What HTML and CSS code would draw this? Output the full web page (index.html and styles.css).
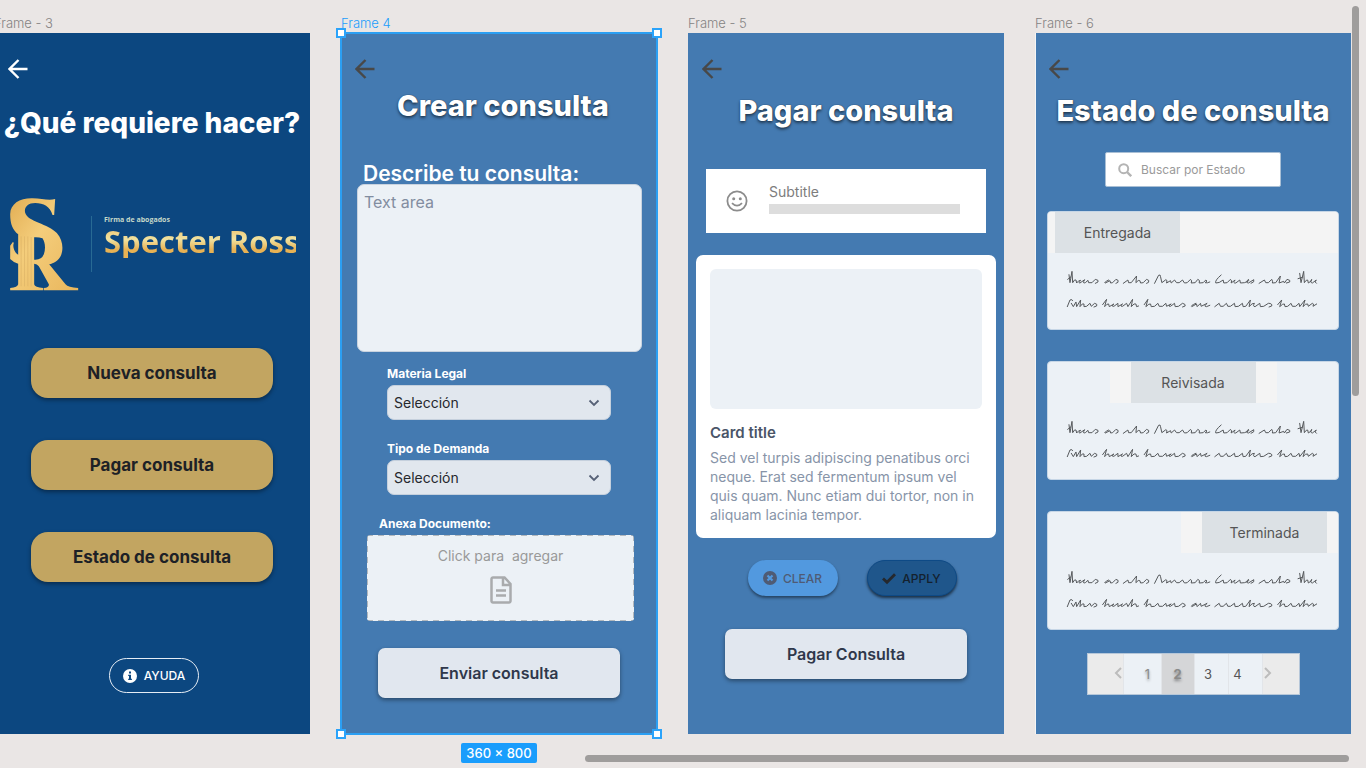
FILE: index.html
```html
<!DOCTYPE html>
<html lang="es">
<head>
<meta charset="utf-8">
<meta name="viewport" content="width=device-width, initial-scale=1">
<title>Specter Ross</title>
<link rel="stylesheet" href="styles.css">
</head>
<body>
<svg class="defs" aria-hidden="true">
  <symbol id="back" viewBox="0 0 20 20"><path d="M19.500 10H2M10.500 1L1.500 10l9 9" fill="none" stroke="currentColor" stroke-width="2.400"/></symbol>
  <symbol id="chevron" viewBox="0 0 12 8"><path d="M1.500 1.500L6 6l4.500-4.500" fill="none" stroke="currentColor" stroke-width="1.800"/></symbol>
  <symbol id="scribble" viewBox="50 205 760 120">
    <path fill="none" stroke="currentColor" stroke-width="3" stroke-linecap="round" stroke-linejoin="round" d="M55 236L64 229M59 222L62 246L68 212L70 246Q76 234 80 238L82 247Q88 238 94 239Q86 248 92 247L106 237Q98 250 108 246L116 239L118 246L128 246L138 236Q150 238 146 244L138 248
    M178 238Q162 246 168 247L182 240L184 247L190 246L200 236Q210 238 206 245L200 248
    M222 248L236 238L238 246L246 246L262 226L260 246Q268 236 272 240L274 247L282 246L292 236Q302 238 298 245L292 248
    M316 248L328 224Q334 220 334 228L338 246L350 237Q356 238 352 247L364 240L366 247L376 238L382 246L390 246L400 238L406 247L414 246L424 236Q430 240 426 247L438 246L446 236Q454 238 450 247L462 246L470 238Q478 240 468 246Q474 248 482 244
    M516 223Q496 240 500 247Q510 248 522 238L524 247L534 246L544 236Q550 240 546 247L558 238Q550 248 560 247L572 238L574 247L586 246Q604 240 598 236Q588 246 598 247L614 237Q618 244 606 248
    M630 248L646 238L650 246L658 246L668 236Q672 242 670 247L680 246L694 226L690 247L704 242L706 247L714 236Q726 238 722 244L712 247
    M747 234L760 230M752 218L756 246L764 212L766 246Q772 236 776 238L778 247Q790 240 788 236Q782 246 790 247L802 238Q794 244 802 248
    M54 318L62 298Q68 294 70 300M66 308L72 318L80 304L82 318L94 298L92 318Q100 306 104 310L104 318L112 317L122 308L126 317L136 308Q146 310 142 316L134 319
    M160 312L172 296L166 318Q174 308 178 310L180 318L194 310Q184 318 194 317L206 308L206 318L220 310Q210 318 220 317L232 308L236 318L250 296L246 318Q256 306 260 310L262 318L268 316
    M285 312L296 296L290 318Q300 308 304 310L306 318L316 317L326 308L330 317L340 317L350 308L352 317L366 310Q354 318 364 317L376 308L378 318L388 317L400 308Q410 310 408 316L400 319
    M440 308Q422 316 428 318L442 310L444 318L454 308L456 317L474 308Q462 318 472 318L482 314
    M497 318L510 308L514 317L522 317L532 308L536 317L544 317L556 308L558 318L568 317L580 308L582 318L590 317L604 298L600 318Q610 306 616 308Q610 318 618 318L632 308L634 318L644 317L658 308Q670 308 668 316L660 319
    M686 312L698 298L692 318Q702 308 706 310L708 318L716 317L726 308L730 317L740 317L750 308L752 318L768 298L762 318Q770 308 776 310L778 317L790 308Q796 308 792 317L803 310"/>
  </symbol>
</svg>

<main class="canvas">
  <section class="column">
    <h2 class="frame-name">Frame - 3</h2>
    <div class="frame frame-home">
      <button class="back back-light" aria-label="Volver"><svg><use href="#back"/></svg></button>
      <h1 class="title title-home">¿Qué requiere hacer?</h1>
      <div class="logo">
        <svg class="monogram" viewBox="30 50 206 285" aria-hidden="true">
          <defs>
            <linearGradient id="gold" x1="0" y1="0" x2="1" y2="1"><stop offset="0" stop-color="#e2ae54"/><stop offset=".4" stop-color="#f4cd7b"/><stop offset="1" stop-color="#e9b65c"/></linearGradient>
          </defs>
          <path fill="url(#gold)" fill-rule="evenodd" d="M165 56L162 104L157 104C150 78 130 68 105 68C82 68 71 82 75 97C82 124 145 130 170 158C188 178 190 205 183 224C176 241 160 249 147 252L196 312Q204 322 234 323V330H131V323Q148 321 146 312L116 258Q111 250 102 250V312Q104 322 129 323V330H30V323Q53 321 54 312V250Q42 248 30 236V196L38 185L41 187C36 200 44 218 54 223V162C38 150 30 132 30 102C30 70 60 53 97 54C125 54 145 62 165 56ZM102 171V238Q124 240 131 222C137 205 135 186 127 174Q115 170 102 171Z"/>
          <path d="M63 168V318M73 168V318M83 168V318M93 170V318" stroke="#dcb467" stroke-width="2"/>
        </svg>
        <div class="wordmark">
          <p class="tagline">Firma de abogados</p>
          <p class="brand">Specter Ross</p>
        </div>
      </div>
      <nav class="menu">
        <button class="gold-button">Nueva consulta</button>
        <button class="gold-button">Pagar consulta</button>
        <button class="gold-button">Estado de consulta</button>
      </nav>
      <button class="help">
        <svg viewBox="0 0 14 14" aria-hidden="true"><circle cx="7" cy="7" r="7" fill="#fff"/><path d="M6 2.500h2v2H6zM5.200 5.700H8v4h.9V11H5.200V9.700H6V7h-.8z" fill="#0c4780"/></svg>
        AYUDA
      </button>
    </div>
  </section>

  <section class="column">
    <h2 class="frame-name frame-name-active">Frame 4</h2>
    <div class="frame frame-selected">
      <i class="handle handle-nw"></i><i class="handle handle-ne"></i><i class="handle handle-sw"></i><i class="handle handle-se"></i>
      <button class="back" aria-label="Volver"><svg><use href="#back"/></svg></button>
      <h1 class="title title-create">Crear consulta</h1>
      <form class="form">
        <label class="big-label" for="descripcion">Describe tu consulta:</label>
        <textarea class="textarea" id="descripcion" placeholder="Text area"></textarea>
        <div class="field">
          <label class="label" for="materia">Materia Legal</label>
          <div class="select-wrap"><select class="select" id="materia"><option>Selección</option></select><svg><use href="#chevron"/></svg></div>
        </div>
        <div class="field">
          <label class="label" for="tipo">Tipo de Demanda</label>
          <div class="select-wrap"><select class="select" id="tipo"><option>Selección</option></select><svg><use href="#chevron"/></svg></div>
        </div>
        <div class="upload">
          <label class="label label-upload" for="documento">Anexa Documento:</label>
          <button class="dropzone" id="documento" type="button">
            <span>Click para&nbsp; agregar</span>
            <svg viewBox="0 0 22 28" aria-hidden="true"><path d="M3 1.500h11.500L20.500 8v17a1.500 1.500 0 0 1-1.500 1.500H3A1.500 1.500 0 0 1 1.500 25V3A1.500 1.500 0 0 1 3 1.500zM13 2v7h7M6 14.500h10M6 19.500h10" fill="none" stroke="#a9abad" stroke-width="2.500"/></svg>
          </button>
        </div>
        <button class="pale-button" type="button">Enviar consulta</button>
      </form>
    </div>
    <p class="dimensions">360 × 800</p>
  </section>

  <section class="column">
    <h2 class="frame-name">Frame - 5</h2>
    <div class="frame">
      <button class="back" aria-label="Volver"><svg><use href="#back"/></svg></button>
      <h1 class="title">Pagar consulta</h1>
      <div class="subtitle-card">
        <svg viewBox="0 0 22 22" aria-hidden="true"><circle cx="11" cy="11" r="9.600" fill="none" stroke="#8c8c8c" stroke-width="1.800"/><circle cx="7.700" cy="8.700" r="1.500" fill="#8c8c8c"/><circle cx="14.300" cy="8.700" r="1.500" fill="#8c8c8c"/><path d="M6 13.200Q11 18.200 16 13.200" fill="none" stroke="#8c8c8c" stroke-width="1.800"/></svg>
        <div class="subtitle-body">
          <p class="subtitle">Subtitle</p>
          <div class="subtitle-bar"></div>
        </div>
      </div>
      <article class="card">
        <div class="card-image"></div>
        <h3 class="card-title">Card title</h3>
        <p class="card-text">Sed vel turpis adipiscing penatibus orci neque. Erat sed fermentum ipsum vel quis quam. Nunc etiam dui tortor, non in aliquam lacinia tempor.</p>
      </article>
      <div class="actions">
        <button class="chip chip-clear"><svg viewBox="0 0 14 14" aria-hidden="true"><circle cx="7" cy="7" r="7" fill="#4f5b74"/><path d="M4.500 4.500l5 5M9.500 4.500l-5 5" stroke="#5299df" stroke-width="2.200"/></svg>CLEAR</button>
        <button class="chip chip-apply"><svg viewBox="0 0 14 14" aria-hidden="true"><path d="M1 7.500L5 11.300L13 3.200" fill="none" stroke="#25282d" stroke-width="2.800"/></svg>APPLY</button>
      </div>
      <button class="pale-button pale-button-pay">Pagar Consulta</button>
    </div>
  </section>

  <section class="column">
    <h2 class="frame-name">Frame - 6</h2>
    <div class="frame frame-status">
      <button class="back" aria-label="Volver"><svg><use href="#back"/></svg></button>
      <h1 class="title">Estado de consulta</h1>
      <label class="search">
        <svg viewBox="0 0 14 14" aria-hidden="true"><circle cx="5.700" cy="5.700" r="4.500" fill="none" stroke="#b4b4b4" stroke-width="2"/><path d="M9 9l4.200 4.200" stroke="#b4b4b4" stroke-width="2.400"/></svg>
        <input type="search" placeholder="Buscar por Estado" aria-label="Buscar por Estado">
      </label>
      <div class="states">
        <article class="state">
          <div class="tab-strip strip-first"><button class="tab">Entregada</button></div>
          <svg class="scribble"><use href="#scribble"/></svg>
        </article>
        <article class="state">
          <div class="tab-strip strip-middle"><button class="tab">Reivisada</button></div>
          <svg class="scribble"><use href="#scribble"/></svg>
        </article>
        <article class="state">
          <div class="tab-strip strip-last"><button class="tab">Terminada</button></div>
          <svg class="scribble"><use href="#scribble"/></svg>
        </article>
      </div>
      <nav class="pages" aria-label="Páginas">
        <button class="page page-prev" aria-label="Anterior"><svg viewBox="0 0 8 12"><path d="M7 1L2 6l5 5" fill="none" stroke="#bcbcbc" stroke-width="2"/></svg></button>
        <button class="page page-first">1</button>
        <button class="page page-current">2</button>
        <button class="page page-third">3</button>
        <button class="page page-fourth">4</button>
        <button class="page page-next" aria-label="Siguiente"><svg viewBox="0 0 8 12"><path d="M1 1l5 5-5 5" fill="none" stroke="#bcbcbc" stroke-width="2"/></svg></button>
      </nav>
    </div>
  </section>
</main>
<div class="scroll scroll-y"></div>
<div class="scroll scroll-x"></div>
</body>
</html>
```
FILE: styles.css
```css
* { box-sizing: border-box; }
body {
  margin: 0;
  min-height: 100vh;
  overflow: hidden;
  background: #eae6e5;
  font-family: Inter, "Liberation Sans", sans-serif;
  color: #222;
}
h1, h2, h3, p { margin: 0; }
button, input, select, textarea { font: inherit; color: inherit; margin: 0; border: 0; padding: 0; }
button { background: none; cursor: pointer; }
.defs { position: absolute; width: 0; height: 0; }

.canvas {
  display: grid;
  grid-template-columns: repeat(4, 1fr);
  gap: 31px;
  margin-left: -6px;
  padding: 15px 15px 0 0;
}
.column { min-width: 0; display: flex; flex-direction: column; }
.frame-name { font-size: 13px; line-height: 16px; font-weight: 300; color: #858383; margin-bottom: 2px; }
.frame-name-active { color: #1a9dfc; }
.frame {
  position: relative;
  display: flex;
  flex-direction: column;
  padding: 26px 0 35px;
  background: #447ab1;
  min-height: 701px;
}
.frame-home { background: #0c4780; }
.frame-status { box-shadow: inset 1px 0 #f5f5f5; }
.frame-selected { outline: 2px solid #2b9ff3; outline-offset: -1px; }
.handle { position: absolute; width: 10px; height: 10px; background: #fff; border: 2px solid #2ba3fa; }
.handle-nw { left: -5px; top: -5px; }
.handle-ne { right: -5px; top: -5px; }
.handle-sw { left: -5px; bottom: -5px; }
.handle-se { right: -5px; bottom: -5px; }
.dimensions {
  align-self: center;
  margin-top: 9px;
  padding: 0 5px;
  border-radius: 2px;
  background: #1a9dfc;
  color: #fff;
  font-size: 13px;
  font-weight: 500;
  line-height: 20px;
}

.back { width: 20px; height: 20px; margin-left: 14px; color: #484848; }
.back svg { display: block; width: 20px; height: 20px; }
.back-light { color: #fff; }
.title {
  margin-top: 14px;
  font-size: 29px;
  line-height: 36px;
  font-weight: 800;
  text-align: center;
  white-space: nowrap;
  color: #fff;
  text-shadow: 0 2px 3px rgba(0, 0, 0, .5), 0 0 1px rgba(0, 0, 0, .7);
}
.title-home { margin-top: 26px; font-size: 28px; text-shadow: none; }
.title-create { margin-top: 9px; padding-left: 8px; }

.logo { display: flex; margin: 56px 14px 0 16px; height: 95px; overflow: hidden; }
.monogram { width: 69px; height: 95px; flex: none; }
.wordmark { margin: 19px 0 20px 12px; padding-left: 12px; border-left: 1px solid #286a94; white-space: nowrap; font-family: "Open Sans", sans-serif; }
.tagline { font-size: 7px; line-height: 8px; font-weight: 700; color: #c5d8c9; }
.brand {
  font-size: 31px;
  line-height: 34px;
  font-weight: 700;
  background: linear-gradient(#f0bd64, #f0e2a0 45%, #e8b254 75%);
  -webkit-background-clip: text;
  background-clip: text;
  color: transparent;
}

.menu { display: flex; flex-direction: column; gap: 42px; margin: 56px 37px 0; }
.gold-button {
  height: 50px;
  border-radius: 17px;
  background: #c2a561;
  color: #1d2126;
  font-size: 17px;
  font-weight: 700;
  box-shadow: 0 2px 4px rgba(0, 0, 0, .4);
}
.help {
  align-self: center;
  display: flex;
  align-items: center;
  gap: 7px;
  height: 35px;
  margin: 76px 0 0 4px;
  padding: 0 13px;
  border: 1px solid #e6edf5;
  border-radius: 18px;
  color: #fff;
  font-size: 12px;
  font-weight: 500;
}
.help svg, .chip svg { width: 14px; height: 14px; }

.form { display: flex; flex-direction: column; margin: 40px 15px 0 16px; }
.big-label { padding-left: 6px; font-size: 21px; line-height: 20px; font-weight: 600; color: #fff; }
.textarea {
  height: 168px;
  padding: 6px;
  border: 1px solid #c9d3df;
  border-radius: 7px;
  background: #ecf1f6;
  font-size: 16px;
  line-height: 22px;
  resize: none;
  margin-bottom: 14px;
}
.textarea::placeholder { color: #828da0; }
.field { margin: 0 31px 21px 30px; }
.label { display: block; margin-bottom: 3px; font-size: 12px; line-height: 16px; font-weight: 700; color: #fff; }
.label-upload { padding-left: 12px; }
.select-wrap { display: grid; align-items: center; }
.select-wrap > * { grid-area: 1 / 1; }
.select-wrap svg { justify-self: end; width: 12px; height: 8px; margin-right: 11px; color: #566176; pointer-events: none; }
.select {
  width: 100%;
  height: 35px;
  padding: 0 6px;
  appearance: none;
  border: 1px solid #c5d0dd;
  border-radius: 7px;
  background: #e1e7ee;
  font-size: 14px;
  color: #25282d;
}
.upload { margin: 0 8px 0 10px; }
.dropzone {
  display: flex;
  flex-direction: column;
  align-items: center;
  gap: 11px;
  width: 100%;
  height: 86px;
  padding-top: 12px;
  border-radius: 3px;
  background:
    repeating-linear-gradient(90deg, #b3b8bd 0 6px, transparent 6px 11px) top / 100% 1px no-repeat,
    repeating-linear-gradient(90deg, #b3b8bd 0 6px, transparent 6px 11px) bottom / 100% 1px no-repeat,
    repeating-linear-gradient(#b3b8bd 0 6px, transparent 6px 11px) left / 1px 100% no-repeat,
    repeating-linear-gradient(#b3b8bd 0 6px, transparent 6px 11px) right / 1px 100% no-repeat,
    #ecf1f6;
  color: #999;
  font-size: 14px;
  line-height: 18px;
}
.dropzone svg { width: 22px; height: 28px; }
.pale-button {
  height: 50px;
  margin: 27px 22px 0 21px;
  border-radius: 7px;
  background: #e1e7ef;
  color: #2f384b;
  font-size: 16px;
  font-weight: 600;
  box-shadow: 0 2px 4px rgba(0, 0, 0, .4);
}
.pale-button-pay { margin: 33px 37px 0; }

.subtitle-card {
  display: flex;
  align-items: center;
  gap: 21px;
  height: 64px;
  margin: 40px 18px 0;
  padding: 0 26px 0 20px;
  background: #fff;
}
.subtitle-card svg { width: 22px; height: 22px; flex: none; }
.subtitle-body { flex: 1; padding-bottom: 6px; }
.subtitle { font-size: 14px; line-height: 20px; color: #7d7d7d; margin-bottom: 2px; }
.subtitle-bar { height: 10px; background: #ddd; }
.card { margin: 22px 8px 0; padding: 14px; border-radius: 7px; background: #fff; }
.card-image { height: 140px; border-radius: 6px; background: #ecf1f6; }
.card-title { margin-top: 14px; font-size: 15px; line-height: 20px; font-weight: 600; color: #4a5568; }
.card-text { margin-top: 5px; font-size: 14px; line-height: 19px; color: #8794a8; }
.actions { display: flex; justify-content: center; gap: 29px; margin: 22px 0 0 12px; }
.chip {
  display: flex;
  align-items: center;
  justify-content: center;
  gap: 6px;
  width: 90px;
  height: 36px;
  border-radius: 18px;
  font-size: 12px;
  font-weight: 500;
}
.chip-clear { background: #5299df; color: #4f5b74; box-shadow: 0 2px 3px rgba(0, 0, 0, .45); }
.chip-apply { background: #1f568b; color: #14212e; border: 1px solid #0e4a86; box-shadow: 0 2px 3px rgba(0, 0, 0, .6); }

.search {
  align-self: center;
  display: flex;
  align-items: center;
  gap: 9px;
  width: 176px;
  height: 35px;
  margin-top: 23px;
  padding: 0 12px;
  border: 1px solid #a9bfd5;
  border-radius: 2px;
  background: #fff;
}
.search svg { width: 14px; height: 14px; flex: none; }
.search input { flex: 1; min-width: 0; background: none; font-size: 12px; }
.search input::placeholder { color: #9a9a9a; }
.states { display: flex; flex-direction: column; gap: 31px; margin: 24px 12px 0; }
.state {
  display: flex;
  flex-direction: column;
  height: 119px;
  border: 1px solid #c6d6e6;
  border-radius: 4px;
  background: #ecf1f6;
  overflow: hidden;
}
.tab-strip { display: flex; height: 41px; background: #f4f4f4; }
.tab { width: 125px; background: #dce1e5; color: #555; font-size: 14px; }
.strip-first { padding-left: 7px; }
.strip-middle { align-self: center; padding: 0 21px; }
.strip-last { align-self: flex-end; padding: 0 11px 0 21px; }
.scribble { width: 253px; height: 40px; margin: 16px 0 0 18px; color: #55585b; }
.pages { align-self: center; display: flex; height: 42px; margin-top: 23px; border: 1px solid #b6c7d9; background: #e9e9e9; }
.page { width: 34px; background: #ecf1f6; color: #555; font-size: 13px; border-right: 1px solid #e2e5e9; }
.page svg { width: 8px; height: 12px; }
.page-prev, .page-next { width: 36px; background: #ebebeb; }
.page-prev { padding-left: 26px; }
.page-next { padding-right: 26px; border: 0; }
.page-first { width: 38px; padding-left: 11px; color: #8a8a8a; text-shadow: 0 2px 3px rgba(0, 0, 0, .4); }
.page-current { width: 33px; background: #d5d6d8; color: #8a8a8a; font-weight: 700; text-shadow: 0 2px 3px rgba(0, 0, 0, .4); }
.page-third { padding-right: 6px; }
.page-fourth { padding-right: 15px; }

.scroll { position: fixed; border-radius: 4px; background: #9f9d9c; }
.scroll-y { right: 7px; top: 6px; width: 7px; height: 390px; }
.scroll-x { right: 17px; bottom: 6px; width: 764px; height: 7px; }
```
